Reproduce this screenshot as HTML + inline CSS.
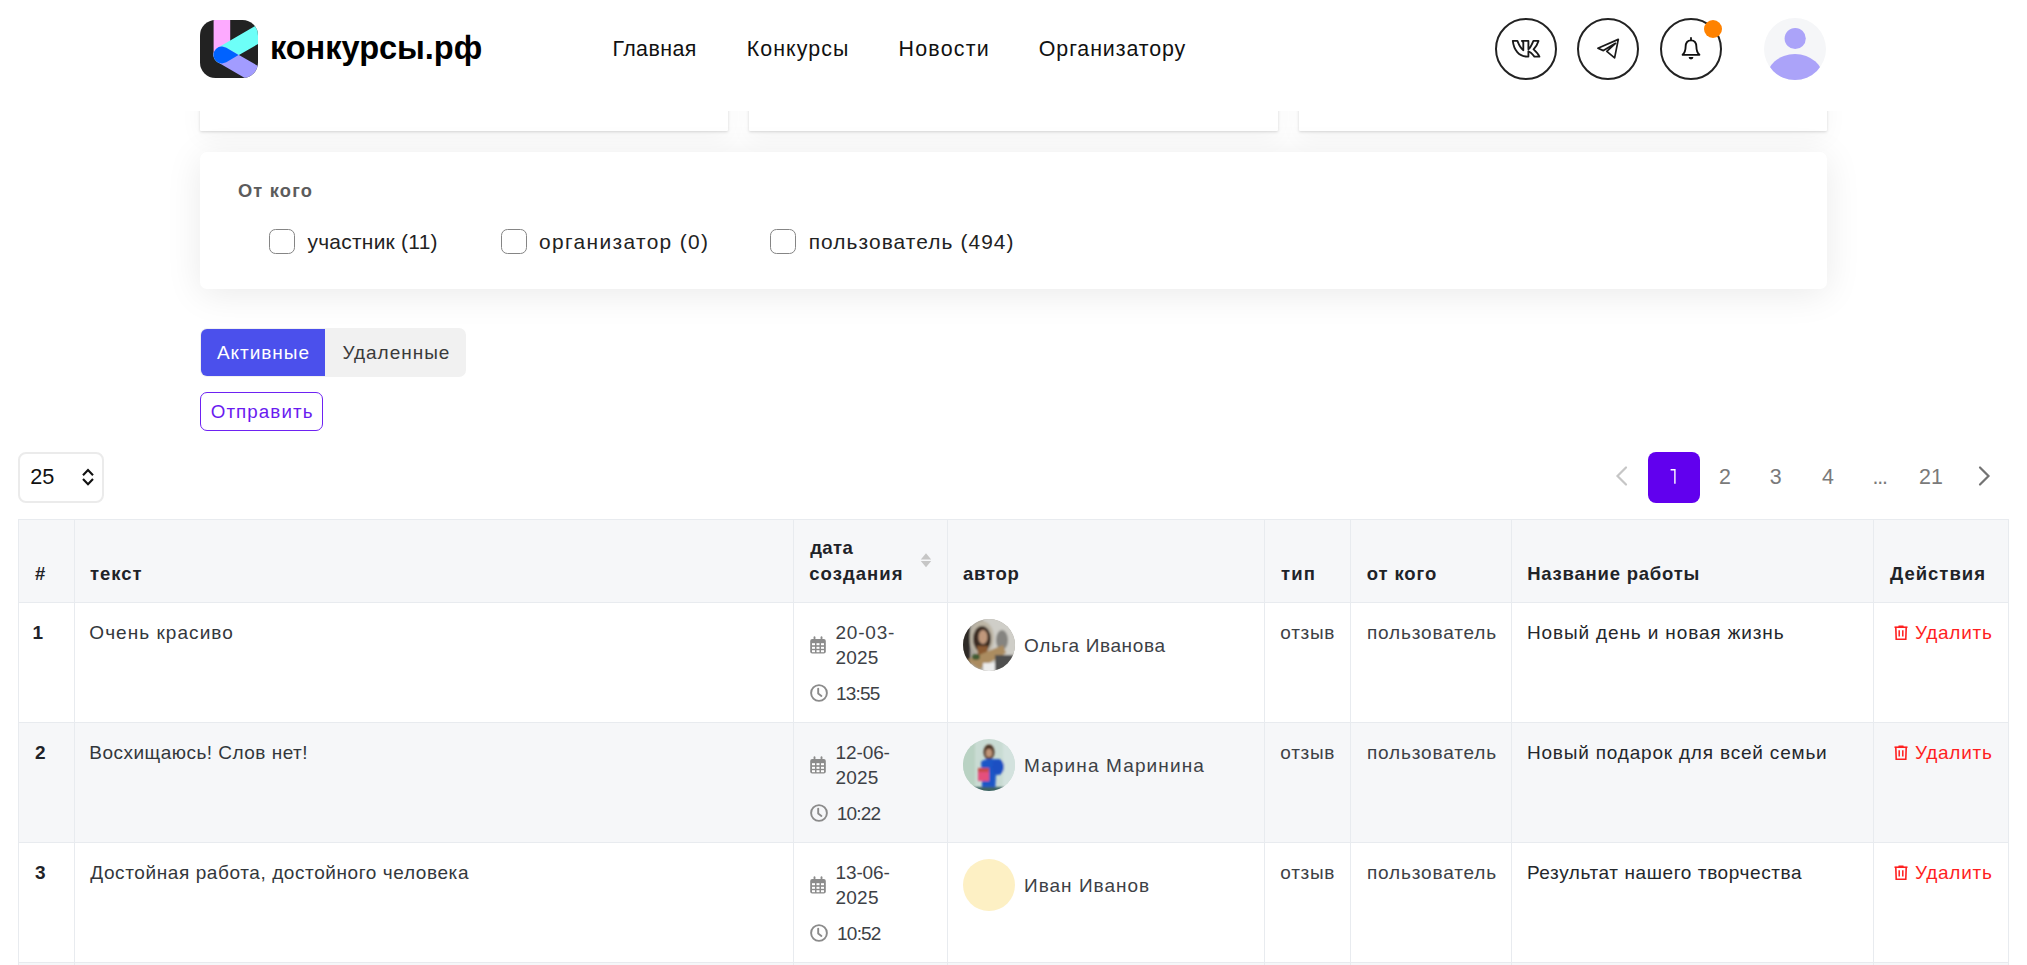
<!DOCTYPE html>
<html lang="ru">
<head>
<meta charset="utf-8">
<title>Отзывы — конкурсы.рф</title>
<style>
html,body{margin:0;padding:0;background:#fff;}
body{width:2027px;height:965px;overflow:hidden;position:relative;font-family:"Liberation Sans",sans-serif;}
.a{position:absolute;box-sizing:border-box;}
.t{position:absolute;z-index:10;white-space:nowrap;line-height:60px;height:60px;font-family:"Liberation Sans",sans-serif;}
.card-s{position:absolute;top:40px;height:91px;background:#fff;border-radius:1px;box-shadow:0 1px 3px rgba(0,0,0,.15),0 8px 24px rgba(0,0,0,.04);}
.hdr{position:absolute;left:0;top:0;width:2027px;height:111px;background:#fff;z-index:5;}
.circ{position:absolute;top:18px;width:62px;height:62px;border:2px solid #222;border-radius:50%;box-sizing:border-box;}
.cb{position:absolute;top:229px;width:25.5px;height:25px;border:1.8px solid #858585;border-radius:6.5px;box-sizing:border-box;background:#fff;}
.hl{position:absolute;left:18px;width:1991px;height:1px;background:#e8ebef;}
.vl{position:absolute;top:519px;width:1px;height:446px;background:#e8ebef;}
.z{z-index:6;}
</style>
</head>
<body>
<!-- small cards behind header -->
<div class="card-s" style="left:200px;width:528px"></div>
<div class="card-s" style="left:749px;width:529px"></div>
<div class="card-s" style="left:1299px;width:528px"></div>

<!-- header -->
<div class="hdr">
  <svg class="a" style="left:200px;top:20px" width="58" height="58" viewBox="0 0 58 58">
    <defs><clipPath id="lc"><rect x="0" y="0" width="58" height="58" rx="15.5" ry="15.5"/></clipPath></defs>
    <g clip-path="url(#lc)">
      <rect x="0" y="0" width="58" height="58" fill="#222"/>
      <rect x="13.6" y="-2" width="16.6" height="38" fill="#fdaaff"/>
      <line x1="22" y1="35" x2="80" y2="1.5" stroke="#6dfff8" stroke-width="17" stroke-linecap="round"/>
      <line x1="22" y1="35" x2="80" y2="68.5" stroke="#a29cff" stroke-width="17" stroke-linecap="round"/>
      <path d="M22 26.5 L26.25 27.64 L38.5 35 L26.25 42.36 L22 43.5 A8.5 8.5 0 0 1 22 26.5 Z" fill="#0062ff"/>
    </g>
  </svg>

  <div class="circ" style="left:1495px"></div>
  <svg class="a" style="left:1510px;top:38px" width="32" height="22" viewBox="0 0 32 22">
    <path d="M2.8 2.9 H7.4 C8.6 6 10.6 10.3 13.3 12.2 V4.3 L11.9 2.9 H18.4 V11.3 C20.3 10 22 6.3 23.4 2.9 H28.5 C27.6 6 25.6 9 23.6 11.4 C26 13.6 28.3 16 29.4 18.6 H24.4 C22.6 16.2 20.6 13.9 18.4 13.3 V18.6 H17.5 C8.8 18.6 3.8 11.8 2.8 2.9 Z" fill="none" stroke="#1a1a1a" stroke-width="1.85" stroke-linejoin="round"/>
  </svg>

  <div class="circ" style="left:1577px"></div>
  <svg class="a" style="left:1594px;top:36px" width="28" height="26" viewBox="0 0 28 26">
    <path d="M3.9 12.2 L24.3 3.4 L20.6 21.9 L12.8 15.3 L21.5 7.3 L9.4 14.6 Z" fill="none" stroke="#1a1a1a" stroke-width="1.7" stroke-linejoin="round"/>
  </svg>

  <div class="circ" style="left:1660px"></div>
  <svg class="a" style="left:1680px;top:36px" width="22" height="26" viewBox="0 0 22 26">
    <path d="M11 4.3 C7.3 4.3 5.6 7 5.6 10.8 C5.6 14.6 5 16.6 2.6 18.8 H19.4 C17 16.6 16.4 14.6 16.4 10.8 C16.4 7 14.7 4.3 11 4.3 Z" fill="none" stroke="#111" stroke-width="1.85" stroke-linejoin="round"/>
    <path d="M11 2 V4" stroke="#111" stroke-width="1.8" stroke-linecap="round"/>
    <path d="M8.6 21 A2.4 2.4 0 0 0 13.4 21 Z" fill="#111"/>
  </svg>
  <div class="a" style="left:1704px;top:20px;width:18px;height:18px;border-radius:50%;background:#ff8200"></div>

  <svg class="a" style="left:1764px;top:18px" width="62" height="62" viewBox="0 0 62 62">
    <defs><clipPath id="av"><circle cx="31" cy="31" r="31"/></clipPath></defs>
    <circle cx="31" cy="31" r="31" fill="#f5f6f8"/>
    <g clip-path="url(#av)">
      <circle cx="31.2" cy="20.5" r="10.6" fill="#aba3f9"/>
      <ellipse cx="31" cy="62" rx="29" ry="26" fill="#aba3f9"/>
    </g>
  </svg>
</div>

<!-- big filter card -->
<div class="a" style="left:200px;top:152px;width:1627px;height:137px;background:#fff;border-radius:7px;box-shadow:0 5px 36px rgba(0,0,0,.085)"></div>
<div class="cb" style="left:269.2px"></div>
<div class="cb" style="left:501.2px"></div>
<div class="cb" style="left:770.2px"></div>

<!-- tabs -->
<div class="a" style="left:200px;top:328px;width:265.5px;height:49px;background:#f1f1f1;border-radius:7px"></div>
<div class="a" style="left:201px;top:329px;width:124px;height:46.5px;background:#4b50ec;border-radius:6px 0 0 6px"></div>

<!-- send button -->
<div class="a" style="left:200px;top:392px;width:123px;height:39px;border:1.8px solid #6e22f2;border-radius:7px"></div>

<!-- per page select -->
<div class="a" style="left:18px;top:451.5px;width:86px;height:51px;border:2px solid #ebebeb;border-radius:8px"></div>
<svg class="a" style="left:80px;top:467px" width="16" height="20" viewBox="0 0 16 20">
  <path d="M3 8.2 L8 3 L13 8.2 M3 12 L8 17.3 L13 12" fill="none" stroke="#111" stroke-width="2.1"/>
</svg>

<!-- pagination -->
<svg class="a" style="left:1612px;top:464px" width="18" height="24" viewBox="0 0 18 24">
  <path d="M14 3.5 L5.5 12 L14 20.5" fill="none" stroke="#c6c6c6" stroke-width="2.2" stroke-linecap="round"/>
</svg>
<div class="a" style="left:1648px;top:451.5px;width:52px;height:51.5px;background:#6100ee;border-radius:8px"></div>
<svg class="a" style="left:1668px;top:467px" width="10" height="19" viewBox="0 0 10 19"><path d="M2.6 2.7 H6.9 V16.8" fill="none" stroke="#fff" stroke-width="1.4"/></svg>
<svg class="a" style="left:1976px;top:464px" width="18" height="24" viewBox="0 0 18 24">
  <path d="M4 3.5 L12.5 12 L4 20.5" fill="none" stroke="#737373" stroke-width="2.2" stroke-linecap="round"/>
</svg>

<!-- table backgrounds -->
<div class="a" style="left:18px;top:519px;width:1991px;height:83px;background:#f6f7f9"></div>
<div class="a" style="left:18px;top:722px;width:1991px;height:120px;background:#f6f7f9"></div>
<div class="a" style="left:18px;top:962px;width:1991px;height:3px;background:#f6f7f9"></div>
<!-- table lines -->
<div class="hl" style="top:519px"></div>
<div class="hl" style="top:602px"></div>
<div class="hl" style="top:722px"></div>
<div class="hl" style="top:842px"></div>
<div class="hl" style="top:962px"></div>
<div class="vl" style="left:18px"></div>
<div class="vl" style="left:74px"></div>
<div class="vl" style="left:793px"></div>
<div class="vl" style="left:947px"></div>
<div class="vl" style="left:1264px"></div>
<div class="vl" style="left:1350px"></div>
<div class="vl" style="left:1511px"></div>
<div class="vl" style="left:1873px"></div>
<div class="vl" style="left:2008px"></div>

<!-- sort icon -->
<svg class="a" style="left:919px;top:551px" width="14" height="18" viewBox="0 0 14 18">
  <path d="M1.8 8.5 L7 2.3 L12.2 8.5 Z M1.8 10 L12.2 10 L7 16.2 Z" fill="#c6c6c6"/>
</svg>


<!-- date/time icons -->
<svg width="0" height="0" style="position:absolute">
  <defs>
    <g id="cal">
      <rect x="0.2" y="3" width="15.6" height="14.6" rx="2" fill="#8b8b8b"/>
      <rect x="3.6" y="0.3" width="1.8" height="4" rx="0.9" fill="#8b8b8b"/>
      <rect x="10.6" y="0.3" width="1.8" height="4" rx="0.9" fill="#8b8b8b"/>
      <g fill="#fff">
        <rect x="2" y="7.2" width="3" height="2"/><rect x="6.5" y="7.2" width="3" height="2"/><rect x="11" y="7.2" width="3" height="2"/>
        <rect x="2" y="10.8" width="3" height="2"/><rect x="6.5" y="10.8" width="3" height="2"/><rect x="11" y="10.8" width="3" height="2"/>
        <rect x="2" y="14.2" width="3" height="2"/><rect x="6.5" y="14.2" width="3" height="2"/><rect x="11" y="14.2" width="3" height="2"/>
      </g>
    </g>
    <g id="clk">
      <circle cx="9" cy="9" r="7.9" fill="none" stroke="#8b8b8b" stroke-width="1.9"/>
      <path d="M8.2 4.6 V9.6 L11.4 12" fill="none" stroke="#8b8b8b" stroke-width="1.9" stroke-linecap="round" stroke-linejoin="round"/>
    </g>
    <g id="trash">
      <path d="M0.5 2.2 H13.5" stroke="#ff1f1f" stroke-width="1.6"/>
      <path d="M5 1.3 H9" stroke="#ff1f1f" stroke-width="1.6" stroke-linecap="round"/>
      <path d="M1.8 2.5 L2.2 14.2 H11.8 L12.2 2.5" fill="none" stroke="#ff1f1f" stroke-width="1.6"/>
      <path d="M5.2 5.2 V11.6 M8.8 5.2 V11.6" stroke="#ff1f1f" stroke-width="1.5"/>
    </g>
  </defs>
</svg>
<svg class="a" style="left:810px;top:635.6px" width="16" height="18"><use href="#cal"/></svg>
<svg class="a" style="left:810px;top:684.4px" width="18" height="18"><use href="#clk"/></svg>
<svg class="a" style="left:1894px;top:625px" width="14" height="15"><use href="#trash"/></svg>
<svg class="a" style="left:810px;top:755.6px" width="16" height="18"><use href="#cal"/></svg>
<svg class="a" style="left:810px;top:804.4px" width="18" height="18"><use href="#clk"/></svg>
<svg class="a" style="left:1894px;top:745px" width="14" height="15"><use href="#trash"/></svg>
<svg class="a" style="left:810px;top:875.6px" width="16" height="18"><use href="#cal"/></svg>
<svg class="a" style="left:810px;top:924.4px" width="18" height="18"><use href="#clk"/></svg>
<svg class="a" style="left:1894px;top:865px" width="14" height="15"><use href="#trash"/></svg>

<!-- avatars -->
<svg class="a" style="left:963px;top:618.7px" width="52" height="52" viewBox="0 0 52 52">
  <defs>
    <clipPath id="ca1"><circle cx="26" cy="26" r="26"/></clipPath>
    <filter id="bl1" x="-20%" y="-20%" width="140%" height="140%"><feGaussianBlur stdDeviation="1.3"/></filter>
  </defs>
  <g clip-path="url(#ca1)">
    <rect width="52" height="52" fill="#a8a49c"/>
    <g filter="url(#bl1)">
      <rect x="20" y="-2" width="34" height="56" fill="#cfcec8"/>
      <ellipse cx="39" cy="21" rx="6" ry="10" fill="#858480"/>
      <rect x="-2" y="-2" width="9" height="56" fill="#2e2a26"/>
      <ellipse cx="19" cy="19" rx="12" ry="17" fill="#bdb6a6"/>
      <ellipse cx="19" cy="20" rx="9" ry="13" fill="#3a2c22"/>
      <ellipse cx="20" cy="18" rx="4.5" ry="7" fill="#c0987c"/>
      <path d="M14 27 L25 27 L24 36 L15 36 Z" fill="#8a5a30"/>
      <path d="M4 41 L40 26 L43 34 L16 50 Z" fill="#ab8c60"/>
      <ellipse cx="13" cy="38" rx="4" ry="3" fill="#405a30"/>
      <ellipse cx="35" cy="42" rx="3" ry="3" fill="#d89888"/>
      <rect x="32" y="36" width="20" height="18" fill="#505050"/>
      <rect x="20" y="44" width="12" height="10" fill="#ececec"/>
    </g>
  </g>
</svg>
<svg class="a" style="left:963px;top:738.7px" width="52" height="52" viewBox="0 0 52 52">
  <defs>
    <clipPath id="ca2"><circle cx="26" cy="26" r="26"/></clipPath>
    <filter id="bl2" x="-20%" y="-20%" width="140%" height="140%"><feGaussianBlur stdDeviation="1.2"/></filter>
  </defs>
  <g clip-path="url(#ca2)">
    <rect width="52" height="52" fill="#c9dbd3"/>
    <g filter="url(#bl2)">
      <rect x="-2" y="-2" width="14" height="56" fill="#b9d2c3"/>
      <rect x="40" y="-2" width="14" height="56" fill="#d3e2de"/>
      <ellipse cx="26" cy="13" rx="5.5" ry="7.5" fill="#4a3020"/>
      <ellipse cx="26" cy="14" rx="3.2" ry="4.3" fill="#c09478"/>
      <path d="M18 23 C22 19 32 19 37 22 L39 31 L33 36 L32 54 H19 L19 38 Z" fill="#1e56c6"/>
      <ellipse cx="35" cy="28" rx="6" ry="8" fill="#1b50c2"/>
      <rect x="15" y="30" width="11" height="12" fill="#e4507c"/>
      <rect x="15" y="29" width="11" height="4" fill="#c84848"/>
      <rect x="-2" y="48" width="56" height="6" fill="#3d6463"/>
    </g>
  </g>
</svg>
<div class="a" style="left:963px;top:858.7px;width:52px;height:52px;border-radius:50%;background:#fdf0c4"></div>


<div class="t" style="left:269.9px;top:18.2px;font-size:32.6px;font-weight:700;letter-spacing:-0.04px;color:#000">конкурсы.рф</div>
<div class="t" style="left:612.4px;top:18.5px;font-size:21.4px;font-weight:400;letter-spacing:0.43px;color:#111">Главная</div>
<div class="t" style="left:746.7px;top:18.5px;font-size:21.4px;font-weight:400;letter-spacing:1.07px;color:#111">Конкурсы</div>
<div class="t" style="left:898.6px;top:18.5px;font-size:21.4px;font-weight:400;letter-spacing:1.20px;color:#111">Новости</div>
<div class="t" style="left:1038.8px;top:18.5px;font-size:21.4px;font-weight:400;letter-spacing:0.90px;color:#111">Организатору</div>
<div class="t" style="left:237.9px;top:161.4px;font-size:18.3px;font-weight:700;letter-spacing:1.20px;color:#5c5c5c">От кого</div>
<div class="t" style="left:307.4px;top:211.6px;font-size:20.9px;font-weight:400;letter-spacing:0.29px;color:#222">участник (11)</div>
<div class="t" style="left:539.1px;top:211.6px;font-size:20.9px;font-weight:400;letter-spacing:1.36px;color:#222">организатор (0)</div>
<div class="t" style="left:808.7px;top:211.6px;font-size:20.9px;font-weight:400;letter-spacing:1.08px;color:#222">пользователь (494)</div>
<div class="t" style="left:216.9px;top:322.9px;font-size:19px;font-weight:400;letter-spacing:0.97px;color:#ffffff">Активные</div>
<div class="t" style="left:342.4px;top:322.9px;font-size:19px;font-weight:400;letter-spacing:0.98px;color:#3a3a3a">Удаленные</div>
<div class="t" style="left:210.7px;top:382.4px;font-size:18.8px;font-weight:400;letter-spacing:1.08px;color:#6a1bf0">Отправить</div>
<div class="t" style="left:30.2px;top:446.9px;font-size:21.7px;font-weight:400;letter-spacing:-0.10px;color:#111">25</div>
<div class="t" style="left:1719.0px;top:446.8px;font-size:21.4px;font-weight:400;letter-spacing:0.00px;color:#7a7a7a">2</div>
<div class="t" style="left:1769.7px;top:446.8px;font-size:21.4px;font-weight:400;letter-spacing:0.00px;color:#7a7a7a">3</div>
<div class="t" style="left:1822.1px;top:446.8px;font-size:21.4px;font-weight:400;letter-spacing:0.00px;color:#7a7a7a">4</div>
<div class="t" style="left:1872.4px;top:446.8px;font-size:21.4px;font-weight:400;letter-spacing:-1.15px;color:#7a7a7a">...</div>
<div class="t" style="left:1919.1px;top:446.8px;font-size:21.4px;font-weight:400;letter-spacing:0.00px;color:#7a7a7a">21</div>
<div class="t" style="left:35.1px;top:544.3px;font-size:18.5px;font-weight:700;letter-spacing:0.00px;color:#1f2328">#</div>
<div class="t" style="left:90.0px;top:544.3px;font-size:18.5px;font-weight:700;letter-spacing:0.95px;color:#1f2328">текст</div>
<div class="t" style="left:810.2px;top:518.3px;font-size:18.5px;font-weight:700;letter-spacing:0.37px;color:#1f2328">дата</div>
<div class="t" style="left:809.2px;top:544.1px;font-size:18.5px;font-weight:700;letter-spacing:1.07px;color:#1f2328">создания</div>
<div class="t" style="left:963.0px;top:544.3px;font-size:18.5px;font-weight:700;letter-spacing:0.75px;color:#1f2328">автор</div>
<div class="t" style="left:1281.1px;top:544.3px;font-size:18.5px;font-weight:700;letter-spacing:1.15px;color:#1f2328">тип</div>
<div class="t" style="left:1366.7px;top:544.3px;font-size:18.5px;font-weight:700;letter-spacing:0.90px;color:#1f2328">от кого</div>
<div class="t" style="left:1527.2px;top:544.3px;font-size:18.5px;font-weight:700;letter-spacing:0.78px;color:#1f2328">Название работы</div>
<div class="t" style="left:1890.0px;top:544.3px;font-size:18.5px;font-weight:700;letter-spacing:1.00px;color:#1f2328">Действия</div>
<div class="t" style="left:32.4px;top:602.5px;font-size:19px;font-weight:700;letter-spacing:0.00px;color:#1f2328">1</div>
<div class="t" style="left:89.3px;top:602.5px;font-size:19px;font-weight:400;letter-spacing:1.05px;color:#33373b">Очень красиво</div>
<div class="t" style="left:835.5px;top:602.5px;font-size:19px;font-weight:400;letter-spacing:0.78px;color:#3d4146">20-03-</div>
<div class="t" style="left:835.5px;top:628.1px;font-size:19px;font-weight:400;letter-spacing:0.20px;color:#3d4146">2025</div>
<div class="t" style="left:835.9px;top:664.1px;font-size:19px;font-weight:400;letter-spacing:-0.80px;color:#3d4146">13:55</div>
<div class="t" style="left:1024.0px;top:615.5px;font-size:19px;font-weight:400;letter-spacing:0.62px;color:#3d4146">Ольга Иванова</div>
<div class="t" style="left:1280.3px;top:602.5px;font-size:19px;font-weight:400;letter-spacing:0.70px;color:#3d4146">отзыв</div>
<div class="t" style="left:1367.0px;top:602.5px;font-size:19px;font-weight:400;letter-spacing:0.83px;color:#3d4146">пользователь</div>
<div class="t" style="left:1526.9px;top:602.5px;font-size:19px;font-weight:400;letter-spacing:0.87px;color:#24272b">Новый день и новая жизнь</div>
<div class="t" style="left:1914.9px;top:602.5px;font-size:19px;font-weight:400;letter-spacing:0.73px;color:#ff1f1f">Удалить</div>
<div class="t" style="left:35.1px;top:722.5px;font-size:19px;font-weight:700;letter-spacing:0.00px;color:#1f2328">2</div>
<div class="t" style="left:89.3px;top:722.5px;font-size:19px;font-weight:400;letter-spacing:0.48px;color:#33373b">Восхищаюсь! Слов нет!</div>
<div class="t" style="left:835.5px;top:722.5px;font-size:19px;font-weight:400;letter-spacing:-0.10px;color:#3d4146">12-06-</div>
<div class="t" style="left:835.5px;top:748.1px;font-size:19px;font-weight:400;letter-spacing:0.20px;color:#3d4146">2025</div>
<div class="t" style="left:836.8px;top:784.1px;font-size:19px;font-weight:400;letter-spacing:-0.80px;color:#3d4146">10:22</div>
<div class="t" style="left:1024.0px;top:735.5px;font-size:19px;font-weight:400;letter-spacing:1.13px;color:#3d4146">Марина Маринина</div>
<div class="t" style="left:1280.3px;top:722.5px;font-size:19px;font-weight:400;letter-spacing:0.70px;color:#3d4146">отзыв</div>
<div class="t" style="left:1367.0px;top:722.5px;font-size:19px;font-weight:400;letter-spacing:0.83px;color:#3d4146">пользователь</div>
<div class="t" style="left:1526.9px;top:722.5px;font-size:19px;font-weight:400;letter-spacing:0.81px;color:#24272b">Новый подарок для всей семьи</div>
<div class="t" style="left:1914.9px;top:722.5px;font-size:19px;font-weight:400;letter-spacing:0.73px;color:#ff1f1f">Удалить</div>
<div class="t" style="left:35.1px;top:842.5px;font-size:19px;font-weight:700;letter-spacing:0.00px;color:#1f2328">3</div>
<div class="t" style="left:90.3px;top:842.5px;font-size:19px;font-weight:400;letter-spacing:0.59px;color:#33373b">Достойная работа, достойного человека</div>
<div class="t" style="left:835.5px;top:842.5px;font-size:19px;font-weight:400;letter-spacing:-0.12px;color:#3d4146">13-06-</div>
<div class="t" style="left:835.5px;top:868.1px;font-size:19px;font-weight:400;letter-spacing:0.23px;color:#3d4146">2025</div>
<div class="t" style="left:837.1px;top:904.1px;font-size:19px;font-weight:400;letter-spacing:-0.80px;color:#3d4146">10:52</div>
<div class="t" style="left:1024.0px;top:855.5px;font-size:19px;font-weight:400;letter-spacing:1.00px;color:#3d4146">Иван Иванов</div>
<div class="t" style="left:1280.3px;top:842.5px;font-size:19px;font-weight:400;letter-spacing:0.70px;color:#3d4146">отзыв</div>
<div class="t" style="left:1367.0px;top:842.5px;font-size:19px;font-weight:400;letter-spacing:0.83px;color:#3d4146">пользователь</div>
<div class="t" style="left:1526.9px;top:842.5px;font-size:19px;font-weight:400;letter-spacing:0.59px;color:#24272b">Результат нашего творчества</div>
<div class="t" style="left:1914.9px;top:842.5px;font-size:19px;font-weight:400;letter-spacing:0.73px;color:#ff1f1f">Удалить</div>
</body>
</html>
